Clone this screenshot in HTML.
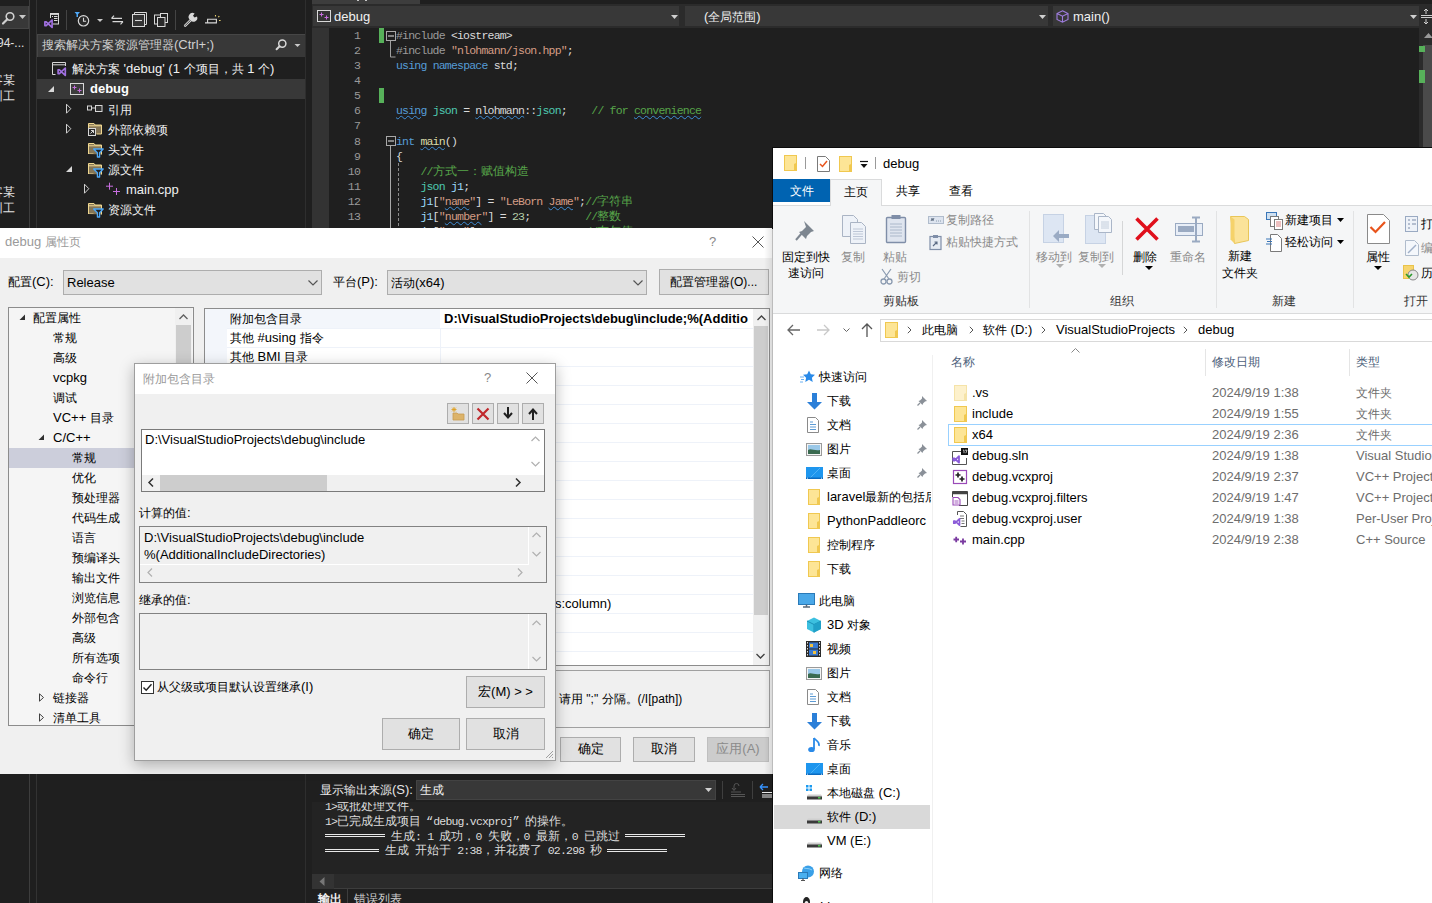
<!DOCTYPE html>
<html><head><meta charset="utf-8"><style>
*{box-sizing:border-box}
html,body{margin:0;padding:0}
body{width:1432px;height:903px;position:relative;overflow:hidden;background:#1f1f1f;font-family:"Liberation Sans",sans-serif;font-size:12px;color:#000}
.a{position:absolute}
.t{position:absolute;white-space:pre;line-height:14px;font-size:13px}
.mono{font-family:"Liberation Mono",monospace;font-size:11.5px;letter-spacing:-0.8px;white-space:pre}
svg{position:absolute;overflow:visible}
</style></head>
<body>
<div class="a" style="left:0px;top:6px;width:29px;height:23px;background:#383838;border-right:1px solid #454545;border-bottom:1px solid #454545"></div><div class="a" style="left:29px;top:0px;width:1px;height:903px;background:#3d3d3d"></div><div class="a" style="left:36px;top:0px;width:1px;height:903px;background:#333333"></div><div class="t" style="left:-3px;top:36.0px;line-height:14px;color:#e0e0e0;font-size:12px">94-...</div><div class="t" style="left:-9px;top:73.0px;line-height:14px;color:#e0e0e0"><span style="font-size:12px">客某</span></div><div class="t" style="left:-9px;top:89.0px;line-height:14px;color:#e0e0e0"><span style="font-size:12px">训工</span></div><div class="t" style="left:-9px;top:185.0px;line-height:14px;color:#e0e0e0"><span style="font-size:12px">客某</span></div><div class="t" style="left:-9px;top:201.0px;line-height:14px;color:#e0e0e0"><span style="font-size:12px">训工</span></div><svg style="left:2px;top:11px" width="14" height="14"><circle cx="8" cy="5.5" r="3.8" fill="none" stroke="#d0d0d0" stroke-width="1.6"/><path d="M5.3 8.2 L1 12.5" stroke="#d0d0d0" stroke-width="2.2" stroke-linecap="round"/></svg><svg style="left:19px;top:15px" width="7" height="5"><path d="M0 0h7l-3.5 4z" fill="#c8c8c8"/></svg><div class="a" style="left:305px;top:0px;width:1px;height:228px;background:#2e2e2e"></div><div class="a" style="left:305px;top:774px;width:1px;height:129px;background:#2e2e2e"></div><div class="a" style="left:66px;top:10px;width:1px;height:20px;background:#444"></div><div class="a" style="left:175px;top:10px;width:1px;height:20px;background:#444"></div><div class="a" style="left:37px;top:34px;width:268px;height:23px;background:#383838;border-top:1px solid #464646;border-left:1px solid #464646"></div><div class="t" style="left:42px;top:38.0px;line-height:14px;color:#d0d0d0"><span style="font-size:12px">搜索解决方案资源管理器</span>(Ctrl+;)</div><div class="a" style="left:37px;top:79px;width:268px;height:20px;background:#383838"></div><svg style="left:37px;top:0px" width="268" height="228" viewBox="37 0 268 228">
<!-- VS doc icon -->
<rect x="50.5" y="13.5" width="8" height="10.5" fill="#1f1f1f" stroke="#d8d8d8"/>
<path d="M50.5 14.2h8" stroke="#d8d8d8" stroke-width="1.4"/>
<path d="M52 16.5h1M54 16.5h3.5M52 18.5h1M54 18.5h3.5M54 20.5h3.5" stroke="#d8d8d8" stroke-width="1"/>
<rect x="43" y="18" width="10" height="10" fill="#1f1f1f"/>
<path transform="translate(44,19.2) scale(1.0)" d="M0.9 2.6 L2.2 2.6 L8.1 8.2 L8.1 0.8 L2.2 6.4 L0.9 6.4 Z" fill="none" stroke="#a070e0" stroke-width="1.7" stroke-linejoin="round"/>
<rect x="66" y="10" width="1" height="20" fill="#444"/>
<!-- filter clock -->
<path d="M74.5 12h5.5l-2 2.3v2.7h-1.5v-2.7z" fill="#4ea8f8"/>
<circle cx="83.5" cy="20.8" r="5.2" fill="#2a2a2a" stroke="#d8d8d8" stroke-width="1.2"/>
<path d="M83.5 17.8v3.4h2.6" fill="none" stroke="#d8d8d8" stroke-width="1.1"/>
<path d="M97 19h6l-3 3z" fill="#c8c8c8"/>
<!-- sync -->
<path d="M111.5 18.4h10.5M111.5 18.4l2.5-2.8M112.5 21.6h10.5M123 21.6l-2.5 2.8" fill="none" stroke="#d8d8d8" stroke-width="1.1"/>
<!-- collapse -->
<path d="M134.5 14V12.5h12v12H145" fill="none" stroke="#d8d8d8" stroke-width="1"/>
<rect x="132.5" y="14.5" width="12" height="12" fill="#333" stroke="#d8d8d8" stroke-width="1"/>
<path d="M135 20.5h7" stroke="#d8d8d8" stroke-width="1.1"/>
<!-- copy/pages -->
<rect x="154.5" y="15" width="6" height="9" fill="none" stroke="#d8d8d8" stroke-width="1"/>
<rect x="160.5" y="13.5" width="7" height="9" fill="#222" stroke="#d8d8d8" stroke-width="1"/>
<rect x="157.5" y="17.5" width="7.5" height="9" fill="#2a2a2a" stroke="#d8d8d8" stroke-width="1"/>
<rect x="175" y="10" width="1" height="20" fill="#444"/>
<!-- wrench -->
<path d="M185.2 25.6 L191.2 19.6" stroke="#d8d8d8" stroke-width="2.6" stroke-linecap="round"/>
<path d="M185.2 25.6 L191.2 19.6" stroke="#1f1f1f" stroke-width="0.8" stroke-linecap="round"/>
<path d="M190.5 20.2 A3.8 3.8 0 0 1 194.6 13.6 L193 15.8 L194.6 17.6 L197 16.4 A3.8 3.8 0 0 1 190.5 20.2 Z" fill="#d8d8d8"/>
<!-- preview -->
<path d="M205 22.9h2.6v-3.6h8.8v3.6h-8.8" fill="none" stroke="#d8d8d8" stroke-width="1.1"/>
<path d="M215.5 15v1.6M218.3 17.2l1-1M219 20.5h1.6" stroke="#e8d070" stroke-width="1.1"/>
<!-- search box icon -->
<circle cx="282.3" cy="43.6" r="3.6" fill="none" stroke="#d8d8d8" stroke-width="1.5"/>
<path d="M279.6 46.3 L276.6 49.3" stroke="#d8d8d8" stroke-width="2" stroke-linecap="round"/>
<path d="M294.5 44h6l-3 3z" fill="#c8c8c8"/>
<!-- solution icon -->
<path d="M55.5 74.5h-3v-12h13v3.5M52.5 64.8h13" fill="none" stroke="#d8d8d8" stroke-width="1"/>
<rect x="56.5" y="66.5" width="10" height="10" fill="#1f1f1f"/>
<path transform="translate(57.2,67.2) scale(1.0)" d="M0.9 2.6 L2.2 2.6 L8.1 8.2 L8.1 0.8 L2.2 6.4 L0.9 6.4 Z" fill="none" stroke="#a070e0" stroke-width="1.7" stroke-linejoin="round"/>
<!-- debug row -->
<path d="M54 86V92H48Z" fill="#d8d8d8"/>
<rect x="70.5" y="83.5" width="13" height="11" fill="#3d3d3d" stroke="#d8d8d8" stroke-width="1"/>
<path d="M72.5 87.5h4M74.5 85.5v4M77.5 90.5h4M79.5 88.5v4" stroke="#c86ee0" stroke-width="1"/>
<!-- refs -->
<path d="M66.5 104.2 L70.8 108.7 L66.5 113.2 Z" fill="none" stroke="#d0d0d0" stroke-width="1"/>
<rect x="87.5" y="106" width="4" height="4" fill="none" stroke="#d8d8d8" stroke-width="1"/>
<path d="M91.5 108h4" stroke="#d8d8d8" stroke-width="1"/>
<rect x="95.5" y="105.5" width="6.5" height="6" fill="#333" stroke="#d8d8d8" stroke-width="1"/>
<!-- ext deps -->
<path d="M66.5 124.2 L70.8 128.7 L66.5 133.2 Z" fill="none" stroke="#d0d0d0" stroke-width="1"/>
<path d="M88.5 128V123.5h5.5l1 1.5h6.5v9h-5" fill="#857657" stroke="#f0d890" stroke-width="1"/>
<path d="M89 125.8h12.5" stroke="#f0d890" stroke-width="1"/>
<rect x="88.5" y="128.5" width="7" height="7" fill="#2a2a2a" stroke="#d8d8d8" stroke-width="1"/>
<path d="M90.5 133.5l3-3M91 130.5h2.5V133" fill="none" stroke="#d8d8d8" stroke-width="1"/>
<path d="M88.5 154V143.5h5.5l1 1.5h6.5v9.5" fill="#857657" stroke="#f0d890" stroke-width="1"/>
<path d="M88.5 153.5h5" stroke="#f0d890" stroke-width="1"/>
<rect x="89" y="146" width="12" height="7.5" fill="#857657"/>
<path d="M89 145.8h12.5" stroke="#f0d890" stroke-width="1"/>
<path d="M93.7 149h9.5l-3.6 3.8v4.2h-2.2v-4.2z" fill="#1f1f1f" stroke="#4ea8f8" stroke-width="1.3" stroke-linejoin="round"/>
<path d="M88.5 174V163.5h5.5l1 1.5h6.5v9.5" fill="#857657" stroke="#f0d890" stroke-width="1"/>
<path d="M88.5 173.5h5" stroke="#f0d890" stroke-width="1"/>
<rect x="89" y="166" width="12" height="7.5" fill="#857657"/>
<path d="M89 165.8h12.5" stroke="#f0d890" stroke-width="1"/>
<path d="M93.7 169h9.5l-3.6 3.8v4.2h-2.2v-4.2z" fill="#1f1f1f" stroke="#4ea8f8" stroke-width="1.3" stroke-linejoin="round"/>
<path d="M88.5 214V203.5h5.5l1 1.5h6.5v9.5" fill="#857657" stroke="#f0d890" stroke-width="1"/>
<path d="M88.5 213.5h5" stroke="#f0d890" stroke-width="1"/>
<rect x="89" y="206" width="12" height="7.5" fill="#857657"/>
<path d="M89 205.8h12.5" stroke="#f0d890" stroke-width="1"/>
<path d="M93.7 209h9.5l-3.6 3.8v4.2h-2.2v-4.2z" fill="#1f1f1f" stroke="#4ea8f8" stroke-width="1.3" stroke-linejoin="round"/>
<path d="M72 166V172H66Z" fill="#d8d8d8"/>
<path d="M84.5 184.2 L88.8 188.7 L84.5 193.2 Z" fill="none" stroke="#d0d0d0" stroke-width="1"/>
<path d="M106 186.2h7M109.5 182.7v7M113 191.5h7M116.5 188v7" stroke="#c86ee0" stroke-width="1"/>
</svg><div class="t" style="left:72px;top:62.0px;line-height:14px;color:#f0f0f0"><span style="font-size:12px">解决方案</span> 'debug' (1 <span style="font-size:12px">个项目，共</span> 1 <span style="font-size:12px">个</span>)</div><div class="t" style="left:90px;top:82.0px;line-height:14px;color:#ffffff;font-weight:bold;font-size:13px">debug</div><div class="t" style="left:108px;top:103.0px;line-height:14px;color:#f0f0f0"><span style="font-size:12px">引用</span></div><div class="t" style="left:108px;top:123.0px;line-height:14px;color:#f0f0f0"><span style="font-size:12px">外部依赖项</span></div><div class="t" style="left:108px;top:143.0px;line-height:14px;color:#f0f0f0"><span style="font-size:12px">头文件</span></div><div class="t" style="left:108px;top:163.0px;line-height:14px;color:#f0f0f0"><span style="font-size:12px">源文件</span></div><div class="t" style="left:126px;top:183.0px;line-height:14px;color:#f0f0f0;font-size:13px">main.cpp</div><div class="t" style="left:108px;top:203.0px;line-height:14px;color:#f0f0f0"><span style="font-size:12px">资源文件</span></div><div class="a" style="left:312px;top:0px;width:108px;height:4px;background:#3d3d3d"></div><div class="a" style="left:312px;top:4px;width:1120px;height:24px;background:#2b2b2b"></div><div class="a" style="left:313px;top:6px;width:366px;height:20px;background:#383838"></div><div class="a" style="left:685px;top:6px;width:363px;height:20px;background:#383838"></div><div class="a" style="left:1053px;top:6px;width:366px;height:20px;background:#383838"></div><svg style="left:317px;top:10px" width="14" height="13">
<rect x="0.5" y="0.5" width="13" height="11" fill="#333" stroke="#d8d8d8"/>
<path d="M2.5 4.5h4M4.5 2.5v4M7.5 7.5h4M9.5 5.5v4" stroke="#c86ee0" stroke-width="1"/>
</svg><div class="t" style="left:334px;top:10.0px;line-height:14px;color:#f0f0f0;font-size:13px">debug</div><svg style="left:671px;top:15px" width="7" height="4"><path d="M0 0h7l-3.5 4z" fill="#d0d0d0"/></svg><svg style="left:1039px;top:15px" width="7" height="4"><path d="M0 0h7l-3.5 4z" fill="#d0d0d0"/></svg><svg style="left:1410px;top:15px" width="7" height="4"><path d="M0 0h7l-3.5 4z" fill="#d0d0d0"/></svg><div class="t" style="left:704px;top:10.0px;line-height:14px;color:#f0f0f0">(<span style="font-size:12px">全局范围</span>)</div><svg style="left:1056px;top:10px" width="13" height="13">
<path d="M6.5 0.8L12 3.5V9.5L6.5 12.2L1 9.5V3.5Z M1 3.5L6.5 6.2L12 3.5 M6.5 6.2V12.2" fill="none" stroke="#a07ee0" stroke-width="1.1"/>
</svg><div class="t" style="left:1073px;top:10.0px;line-height:14px;color:#f0f0f0;font-size:13px">main()</div><svg style="left:1420px;top:8px" width="12" height="16"><path d="M1 7.5h11M1 9.5h11M6 1v5M4 3l2-2 2 2M6 11v5M4 14l2 2 2-2" fill="none" stroke="#d0d0d0" stroke-width="1"/></svg><div class="a" style="left:312px;top:28px;width:17px;height:200px;background:#333333"></div><div class="a" style="left:1419px;top:28px;width:13px;height:200px;background:#2b2b2b"></div><div class="a" style="left:1423px;top:45px;width:9px;height:183px;background:#4a4a4a"></div><svg style="left:1424px;top:33px" width="9" height="5"><path d="M0 5L4.5 0L9 5z" fill="#999"/></svg><div class="a" style="left:1419px;top:46px;width:6px;height:6px;background:#57b15a"></div><div class="a" style="left:1419px;top:70px;width:6px;height:13px;background:#57b15a"></div><div class="a" style="left:312px;top:28px;width:1106px;height:200px;overflow:hidden"><div class="t mono" style="left:0px;top:1.0px;width:48px;text-align:right;color:#9a9a9a">1</div><div class="t mono" style="left:84px;top:1.0px;line-height:14px"><span style="color:#9b9b9b;">#include </span><span style="color:#dadada;">&lt;iostream&gt;</span></div><div class="t mono" style="left:0px;top:16.08px;width:48px;text-align:right;color:#9a9a9a">2</div><div class="t mono" style="left:84px;top:16.08px;line-height:14px"><span style="color:#9b9b9b;">#include </span><span style="color:#d69d85;">&quot;nlohmann/json.hpp&quot;</span><span style="color:#dadada;">;</span></div><div class="t mono" style="left:0px;top:31.159999999999997px;width:48px;text-align:right;color:#9a9a9a">3</div><div class="t mono" style="left:84px;top:31.159999999999997px;line-height:14px"><span style="color:#569cd6;">using</span><span style="color:#dadada;"> </span><span style="color:#569cd6;">namespace</span><span style="color:#dadada;"> std;</span></div><div class="t mono" style="left:0px;top:46.24000000000001px;width:48px;text-align:right;color:#9a9a9a">4</div><div class="t mono" style="left:0px;top:61.31999999999999px;width:48px;text-align:right;color:#9a9a9a">5</div><div class="t mono" style="left:0px;top:76.4px;width:48px;text-align:right;color:#9a9a9a">6</div><div class="t mono" style="left:84px;top:76.4px;line-height:14px"><span style="color:#569cd6;text-decoration:underline wavy #3f8fd8;text-decoration-thickness:1px;text-underline-offset:1px">using</span><span style="color:#dadada;"> </span><span style="color:#4ec9b0;">json</span><span style="color:#dadada;"> = </span><span style="color:#dadada;text-decoration:underline wavy #3f8fd8;text-decoration-thickness:1px;text-underline-offset:1px">nlohmann</span><span style="color:#dadada;">::</span><span style="color:#4ec9b0;">json</span><span style="color:#dadada;">;    </span><span style="color:#57a64a;">// for </span><span style="color:#57a64a;text-decoration:underline wavy #3f8fd8;text-decoration-thickness:1px;text-underline-offset:1px">convenience</span></div><div class="t mono" style="left:0px;top:91.48px;width:48px;text-align:right;color:#9a9a9a">7</div><div class="t mono" style="left:0px;top:106.56px;width:48px;text-align:right;color:#9a9a9a">8</div><div class="t mono" style="left:84px;top:106.56px;line-height:14px"><span style="color:#569cd6;">int</span><span style="color:#dadada;"> </span><span style="color:#dcdcaa;text-decoration:underline wavy #3f8fd8;text-decoration-thickness:1px;text-underline-offset:1px">main</span><span style="color:#dadada;">()</span></div><div class="t mono" style="left:0px;top:121.63999999999999px;width:48px;text-align:right;color:#9a9a9a">9</div><div class="t mono" style="left:84px;top:121.63999999999999px;line-height:14px"><span style="color:#dadada;">{</span></div><div class="t mono" style="left:0px;top:136.72px;width:48px;text-align:right;color:#9a9a9a">10</div><div class="t mono" style="left:84px;top:136.72px;line-height:14px"><span style="color:#57a64a;">    //<span style="font-size:12px;letter-spacing:0">方式一：赋值构造</span></span></div><div class="t mono" style="left:0px;top:151.8px;width:48px;text-align:right;color:#9a9a9a">11</div><div class="t mono" style="left:84px;top:151.8px;line-height:14px"><span style="color:#dadada;">    </span><span style="color:#4ec9b0;">json</span><span style="color:#dadada;"> </span><span style="color:#9cdcfe;">j1</span><span style="color:#dadada;">;</span></div><div class="t mono" style="left:0px;top:166.88px;width:48px;text-align:right;color:#9a9a9a">12</div><div class="t mono" style="left:84px;top:166.88px;line-height:14px"><span style="color:#dadada;">    </span><span style="color:#9cdcfe;">j1</span><span style="color:#dadada;">[</span><span style="color:#d69d85;">&quot;</span><span style="color:#d69d85;text-decoration:underline wavy #3f8fd8;text-decoration-thickness:1px;text-underline-offset:1px">name</span><span style="color:#d69d85;">&quot;</span><span style="color:#dadada;">] = </span><span style="color:#d69d85;">&quot;LeBorn </span><span style="color:#d69d85;text-decoration:underline wavy #3f8fd8;text-decoration-thickness:1px;text-underline-offset:1px">Jame</span><span style="color:#d69d85;">&quot;</span><span style="color:#dadada;">;</span><span style="color:#57a64a;">//<span style="font-size:12px;letter-spacing:0">字符串</span></span></div><div class="t mono" style="left:0px;top:181.96px;width:48px;text-align:right;color:#9a9a9a">13</div><div class="t mono" style="left:84px;top:181.96px;line-height:14px"><span style="color:#dadada;">    </span><span style="color:#9cdcfe;">j1</span><span style="color:#dadada;">[</span><span style="color:#d69d85;">&quot;</span><span style="color:#d69d85;text-decoration:underline wavy #3f8fd8;text-decoration-thickness:1px;text-underline-offset:1px">number</span><span style="color:#d69d85;">&quot;</span><span style="color:#dadada;">] = </span><span style="color:#b5cea8;">23</span><span style="color:#dadada;">;</span><span style="color:#57a64a;">         //<span style="font-size:12px;letter-spacing:0">整数</span></span></div><div class="t mono" style="left:0px;top:197.04px;width:48px;text-align:right;color:#9a9a9a">14</div><div class="t mono" style="left:84px;top:197.04px;line-height:14px"><span style="color:#dadada;">    </span><span style="color:#9cdcfe;">j1</span><span style="color:#dadada;">[</span><span style="color:#d69d85;">&quot;man&quot;</span><span style="color:#dadada;">] = </span><span style="color:#569cd6;">true</span><span style="color:#dadada;">;</span><span style="color:#57a64a;">          //<span style="font-size:12px;letter-spacing:0">布尔值</span></span></div></div><svg style="left:386px;top:31px" width="10" height="10"><rect x="0.5" y="0.5" width="9" height="9" fill="none" stroke="#a8a8a8"/><path d="M2 5h6" stroke="#e8e8e8"/></svg><svg style="left:390px;top:41px" width="6" height="17"><path d="M0.5 0v16h5" fill="none" stroke="#a0a0a0"/></svg><svg style="left:386px;top:136px" width="10" height="10"><rect x="0.5" y="0.5" width="9" height="9" fill="none" stroke="#a8a8a8"/><path d="M2 5h6" stroke="#e8e8e8"/></svg><div class="a" style="left:390px;top:146px;width:1px;height:82px;background:#a8a8a8"></div><svg style="left:397px;top:163px" width="3" height="65"><path d="M1.5 0v65" stroke="#8a8a8a" stroke-dasharray="3 2"/></svg><div class="a" style="left:379px;top:28px;width:5px;height:15px;background:#57b15a"></div><div class="a" style="left:379px;top:88px;width:5px;height:15px;background:#57b15a"></div><div class="a" style="left:0px;top:774px;width:1432px;height:129px;background:#1f1f1f"></div><div class="a" style="left:29px;top:774px;width:1px;height:129px;background:#3d3d3d"></div><div class="a" style="left:36px;top:774px;width:1px;height:129px;background:#333333"></div><div class="a" style="left:305px;top:774px;width:1px;height:129px;background:#2e2e2e"></div><div class="a" style="left:312px;top:802px;width:461px;height:72px;background:#232323"></div><div class="t" style="left:320px;top:783.0px;line-height:14px;color:#e6e6e6"><span style="font-size:12px">显示输出来源</span>(S):</div><div class="a" style="left:416px;top:780px;width:300px;height:20px;background:#383838;border:1px solid #434343"></div><div class="t" style="left:420px;top:783.0px;line-height:14px;color:#f0f0f0"><span style="font-size:12px">生成</span></div><svg style="left:705px;top:788px" width="7" height="4"><path d="M0 0h7l-3.5 4z" fill="#d0d0d0"/></svg><div class="a" style="left:722px;top:781px;width:1px;height:18px;background:#3f3f3f"></div><svg style="left:731px;top:783px" width="15" height="14"><path d="M3 7V3a2.5 2.5 0 0 1 5 0M1 5l2 2.5L5 5" fill="none" stroke="#555" stroke-width="1"/><path d="M0 9h10M0 11.5h14M0 13.5h14" stroke="#555" stroke-width="1.2"/></svg><div class="a" style="left:752px;top:781px;width:1px;height:18px;background:#3f3f3f"></div><svg style="left:759px;top:783px" width="14" height="14"><path d="M1 4h8M1 4l3-3M1 4l3 3" fill="none" stroke="#3794ff" stroke-width="1.3"/><path d="M3 9.5h11M3 12h11M3 14h11" stroke="#e8e8e8" stroke-width="1.2"/></svg><div class="a" style="left:312px;top:802px;width:461px;height:72px;overflow:hidden"><div class="t mono" style="left:13px;top:-2px;color:#dcdcdc">1><span style="font-size:12px;letter-spacing:0">或批处理文件。</span></div><div class="t mono" style="left:13px;top:13px;color:#dcdcdc">1&gt;<span style="font-size:12px;letter-spacing:0">已完成生成项目</span><span style="display:inline-block;width:12px;text-align:right;font-size:12px;letter-spacing:0">“</span>debug.vcxproj<span style="display:inline-block;width:12px;text-align:left;font-size:12px;letter-spacing:0">”</span><span style="font-size:12px;letter-spacing:0">的操作。</span></div><div class="t mono" style="left:79px;top:28px;color:#dcdcdc"><span style="font-size:12px;letter-spacing:0">生成</span>: 1 <span style="font-size:12px;letter-spacing:0">成功，</span>0 <span style="font-size:12px;letter-spacing:0">失败，</span>0 <span style="font-size:12px;letter-spacing:0">最新，</span>0 <span style="font-size:12px;letter-spacing:0">已跳过</span></div><div class="t mono" style="left:73px;top:42px;color:#dcdcdc"><span style="font-size:12px;letter-spacing:0">生成</span> <span style="font-size:12px;letter-spacing:0">开始于</span> 2:38<span style="font-size:12px;letter-spacing:0">，并花费了</span> 02.298 <span style="font-size:12px;letter-spacing:0">秒</span></div></div><div class="a" style="left:325px;top:834px;width:60px;height:1px;background:#e8e8e8"></div><div class="a" style="left:325px;top:836px;width:60px;height:1px;background:#e8e8e8"></div><div class="a" style="left:625px;top:834px;width:60px;height:1px;background:#e8e8e8"></div><div class="a" style="left:625px;top:836px;width:60px;height:1px;background:#e8e8e8"></div><div class="a" style="left:325px;top:849px;width:54px;height:1px;background:#e8e8e8"></div><div class="a" style="left:325px;top:851px;width:54px;height:1px;background:#e8e8e8"></div><div class="a" style="left:607px;top:849px;width:60px;height:1px;background:#e8e8e8"></div><div class="a" style="left:607px;top:851px;width:60px;height:1px;background:#e8e8e8"></div><div class="a" style="left:312px;top:874px;width:461px;height:15px;background:#2b2b2b;border-bottom:1px solid #3d3d3d"></div><div class="a" style="left:312px;top:874px;width:22px;height:15px;background:#333333"></div><svg style="left:319px;top:877px" width="6" height="9"><path d="M5.5 0L0.5 4.5L5.5 9z" fill="#777"/></svg><div class="t" style="left:318px;top:892.0px;line-height:14px;color:#f0f0f0;font-weight:bold"><span style="font-size:12px">输出</span></div><div class="a" style="left:347px;top:889px;width:1px;height:14px;background:#3d3d3d"></div><div class="t" style="left:354px;top:892.0px;line-height:14px;color:#d0d0d0"><span style="font-size:12px">错误列表</span></div><div class="a" style="left:357px;top:0px;width:2px;height:1px;background:#c8c8c8"></div><div class="a" style="left:365px;top:0px;width:2px;height:1px;background:#c8c8c8"></div><div class="a" style="left:0px;top:228px;width:773px;height:546px;background:#f0f0f0;border-right:1px solid #d0d0d0"></div><div class="a" style="left:0px;top:228px;width:772px;height:30px;background:#ffffff"></div><div class="t" style="left:5px;top:235.0px;line-height:14px;color:#9a9a9a;font-size:13px">debug <span style="font-size:12px">属性页</span></div><div class="t" style="left:709px;top:235.0px;line-height:14px;color:#888;font-size:13px">?</div><svg style="left:752px;top:236px" width="12" height="12"><path d="M0.5 0.5L11.5 11.5M11.5 0.5L0.5 11.5" stroke="#555" stroke-width="1"/></svg><div class="t" style="left:8px;top:275.0px;line-height:14px;"><span style="font-size:12px">配置</span>(C):</div><div class="a" style="left:63px;top:270px;width:259px;height:25px;background:#e1e1e1;border:1px solid #adadad"></div><div class="t" style="left:67px;top:276.0px;line-height:14px;font-size:13px">Release</div><svg style="left:308px;top:280px" width="10" height="6"><path d="M0.5 0.5L5 5L9.5 0.5" fill="none" stroke="#555" stroke-width="1.2"/></svg><div class="t" style="left:333px;top:275.0px;line-height:14px;"><span style="font-size:12px">平台</span>(P):</div><div class="a" style="left:387px;top:270px;width:260px;height:25px;background:#e1e1e1;border:1px solid #adadad"></div><div class="t" style="left:391px;top:276.0px;line-height:14px;font-size:13px"><span style="font-size:12px">活动</span>(x64)</div><svg style="left:633px;top:280px" width="10" height="6"><path d="M0.5 0.5L5 5L9.5 0.5" fill="none" stroke="#555" stroke-width="1.2"/></svg><div class="a" style="left:659px;top:269px;width:110px;height:26px;background:#e1e1e1;border:1px solid #adadad"></div><div class="t" style="left:670px;top:275.0px;line-height:14px;font-size:12px"><span style="font-size:12px">配置管理器</span>(O)...</div><div class="a" style="left:8px;top:307px;width:186px;height:419px;background:#f5f5f5;border:1px solid #8c8c8c"></div><div class="a" style="left:175px;top:308px;width:17px;height:417px;background:#f0f0f0"></div><div class="a" style="left:176px;top:325px;width:15px;height:120px;background:#cdcdcd"></div><svg style="left:179px;top:314px" width="9" height="6"><path d="M0.5 5L4.5 1L8.5 5" fill="none" stroke="#606060" stroke-width="1.3"/></svg><div class="a" style="left:9px;top:448px;width:166px;height:20px;background:#cccedb"></div><svg style="left:19px;top:314px" width="7" height="7"><path d="M6 0.5V6H0.5z" fill="#303030"/></svg><div class="t" style="left:33px;top:311.0px;line-height:14px;"><span style="font-size:12px">配置属性</span></div><div class="t" style="left:53px;top:331.0px;line-height:14px;"><span style="font-size:12px">常规</span></div><div class="t" style="left:53px;top:351.0px;line-height:14px;"><span style="font-size:12px">高级</span></div><div class="t" style="left:53px;top:371.0px;line-height:14px;font-size:13px">vcpkg</div><div class="t" style="left:53px;top:391.0px;line-height:14px;"><span style="font-size:12px">调试</span></div><div class="t" style="left:53px;top:411.0px;line-height:14px;font-size:13px">VC++ <span style="font-size:12px">目录</span></div><svg style="left:38px;top:434px" width="7" height="7"><path d="M6 0.5V6H0.5z" fill="#303030"/></svg><div class="t" style="left:53px;top:431.0px;line-height:14px;font-size:13px">C/C++</div><div class="t" style="left:72px;top:451.0px;line-height:14px;"><span style="font-size:12px">常规</span></div><div class="t" style="left:72px;top:471.0px;line-height:14px;"><span style="font-size:12px">优化</span></div><div class="t" style="left:72px;top:491.0px;line-height:14px;"><span style="font-size:12px">预处理器</span></div><div class="t" style="left:72px;top:511.0px;line-height:14px;"><span style="font-size:12px">代码生成</span></div><div class="t" style="left:72px;top:531.0px;line-height:14px;"><span style="font-size:12px">语言</span></div><div class="t" style="left:72px;top:551.0px;line-height:14px;"><span style="font-size:12px">预编译头</span></div><div class="t" style="left:72px;top:571.0px;line-height:14px;"><span style="font-size:12px">输出文件</span></div><div class="t" style="left:72px;top:591.0px;line-height:14px;"><span style="font-size:12px">浏览信息</span></div><div class="t" style="left:72px;top:611.0px;line-height:14px;"><span style="font-size:12px">外部包含</span></div><div class="t" style="left:72px;top:631.0px;line-height:14px;"><span style="font-size:12px">高级</span></div><div class="t" style="left:72px;top:651.0px;line-height:14px;"><span style="font-size:12px">所有选项</span></div><div class="t" style="left:72px;top:671.0px;line-height:14px;"><span style="font-size:12px">命令行</span></div><svg style="left:39px;top:693px" width="6" height="10"><path d="M0.5 0.8L4.5 4.5L0.5 8.2z" fill="none" stroke="#404040" stroke-width="1"/></svg><div class="t" style="left:53px;top:691.0px;line-height:14px;"><span style="font-size:12px">链接器</span></div><svg style="left:39px;top:713px" width="6" height="10"><path d="M0.5 0.8L4.5 4.5L0.5 8.2z" fill="none" stroke="#404040" stroke-width="1"/></svg><div class="t" style="left:53px;top:711.0px;line-height:14px;"><span style="font-size:12px">清单工具</span></div><div class="a" style="left:204px;top:308px;width:566px;height:358px;background:#ffffff;border:1px solid #8c8c8c"></div><div class="a" style="left:205px;top:309px;width:22px;height:356px;background:#f3f6fb"></div><div class="a" style="left:205px;top:309px;width:235px;height:19px;background:#f3f6fb"></div><div class="a" style="left:227px;top:328px;width:526px;height:1px;background:#eef2f9"></div><div class="a" style="left:227px;top:347px;width:526px;height:1px;background:#eef2f9"></div><div class="a" style="left:227px;top:366px;width:526px;height:1px;background:#eef2f9"></div><div class="a" style="left:227px;top:385px;width:526px;height:1px;background:#eef2f9"></div><div class="a" style="left:227px;top:404px;width:526px;height:1px;background:#eef2f9"></div><div class="a" style="left:227px;top:423px;width:526px;height:1px;background:#eef2f9"></div><div class="a" style="left:227px;top:442px;width:526px;height:1px;background:#eef2f9"></div><div class="a" style="left:227px;top:461px;width:526px;height:1px;background:#eef2f9"></div><div class="a" style="left:227px;top:480px;width:526px;height:1px;background:#eef2f9"></div><div class="a" style="left:227px;top:499px;width:526px;height:1px;background:#eef2f9"></div><div class="a" style="left:227px;top:518px;width:526px;height:1px;background:#eef2f9"></div><div class="a" style="left:227px;top:537px;width:526px;height:1px;background:#eef2f9"></div><div class="a" style="left:227px;top:556px;width:526px;height:1px;background:#eef2f9"></div><div class="a" style="left:227px;top:575px;width:526px;height:1px;background:#eef2f9"></div><div class="a" style="left:227px;top:594px;width:526px;height:1px;background:#eef2f9"></div><div class="a" style="left:227px;top:613px;width:526px;height:1px;background:#eef2f9"></div><div class="a" style="left:227px;top:632px;width:526px;height:1px;background:#eef2f9"></div><div class="a" style="left:227px;top:651px;width:526px;height:1px;background:#eef2f9"></div><div class="a" style="left:440px;top:328px;width:1px;height:337px;background:#eef2f9"></div><div class="t" style="left:230px;top:312.0px;line-height:14px;"><span style="font-size:12px">附加包含目录</span></div><div class="t" style="left:230px;top:331.0px;line-height:14px;"><span style="font-size:12px">其他</span> #using <span style="font-size:12px">指令</span></div><div class="t" style="left:230px;top:350.0px;line-height:14px;"><span style="font-size:12px">其他</span> BMI <span style="font-size:12px">目录</span></div><div class="t" style="left:444px;top:312.0px;line-height:14px;font-weight:bold;font-size:13px">D:\VisualStudioProjects\debug\include;%(Additio</div><div class="t" style="left:555px;top:597.0px;line-height:14px;font-size:13px">s:column)</div><div class="a" style="left:753px;top:309px;width:16px;height:356px;background:#f0f0f0"></div><div class="a" style="left:754px;top:326px;width:14px;height:289px;background:#cdcdcd"></div><svg style="left:757px;top:315px" width="9" height="6"><path d="M0.5 5L4.5 1L8.5 5" fill="none" stroke="#404040" stroke-width="1.3"/></svg><svg style="left:756px;top:653px" width="9" height="6"><path d="M0.5 1L4.5 5L8.5 1" fill="none" stroke="#404040" stroke-width="1.3"/></svg><div class="a" style="left:204px;top:670px;width:566px;height:58px;background:#f0f0f0;border:1px solid #a0a0a0"></div><div class="t" style="left:559px;top:692.0px;line-height:14px;font-size:12px"><span style="font-size:12px">请用</span> ";" <span style="font-size:12px">分隔。</span>(/I[path])</div><div class="a" style="left:560px;top:737px;width:61px;height:25px;background:#e1e1e1;border:1px solid #adadad"></div><div class="t" style="left:560px;top:737px;width:61px;height:25px;line-height:24px;text-align:center;color:#000">确定</div><div class="a" style="left:633px;top:737px;width:62px;height:25px;background:#e1e1e1;border:1px solid #adadad"></div><div class="t" style="left:633px;top:737px;width:62px;height:25px;line-height:24px;text-align:center;color:#000">取消</div><div class="a" style="left:707px;top:737px;width:62px;height:25px;background:#cccccc;border:1px solid #bfbfbf"></div><div class="t" style="left:707px;top:737px;width:62px;height:25px;line-height:24px;text-align:center;color:#8a8a8a">应用(A)</div><div class="a" style="left:134px;top:363px;width:422px;height:398px;background:#f0f0f0;border:1px solid #9e9e9e;box-shadow:0 4px 14px rgba(0,0,0,0.28)"></div><div class="a" style="left:135px;top:364px;width:420px;height:30px;background:#ffffff"></div><div class="t" style="left:143px;top:372.0px;line-height:14px;color:#9a9a9a"><span style="font-size:12px">附加包含目录</span></div><div class="t" style="left:484px;top:371.0px;line-height:14px;color:#888;font-size:13px">?</div><svg style="left:526px;top:372px" width="12" height="12"><path d="M0.5 0.5L11.5 11.5M11.5 0.5L0.5 11.5" stroke="#555" stroke-width="1"/></svg><div class="a" style="left:447px;top:403px;width:22px;height:21px;background:#e1e1e1;border:1px solid #adadad"></div><div class="a" style="left:472px;top:403px;width:22px;height:21px;background:#e1e1e1;border:1px solid #adadad"></div><div class="a" style="left:497px;top:403px;width:22px;height:21px;background:#e1e1e1;border:1px solid #adadad"></div><div class="a" style="left:522px;top:403px;width:22px;height:21px;background:#e1e1e1;border:1px solid #adadad"></div><svg style="left:450px;top:406px" width="16" height="16">
<path d="M3 7h4l1 1h6v6H3z" fill="#dcb36a" stroke="#c89c50" stroke-width="0.8"/>
<path d="M4 1v5M1.5 3.5h5M2.2 1.7l3.6 3.6M5.8 1.7L2.2 5.3" stroke="#e0a020" stroke-width="0.9"/>
</svg><svg style="left:476px;top:407px" width="14" height="14"><path d="M1.5 1.5L12.5 12.5M12.5 1.5L1.5 12.5" stroke="#c0282c" stroke-width="2.2"/></svg><svg style="left:502px;top:406px" width="12" height="14"><path d="M6 1v10M2 7l4 4.5 4-4.5" fill="none" stroke="#202020" stroke-width="2"/></svg><svg style="left:527px;top:407px" width="12" height="14"><path d="M6 13V3M2 7l4-4.5 4 4.5" fill="none" stroke="#202020" stroke-width="2"/></svg><div class="a" style="left:141px;top:429px;width:404px;height:63px;background:#ffffff;border:1px solid #7a7a7a"></div><div class="t" style="left:145px;top:433.0px;line-height:14px;font-size:13px">D:\VisualStudioProjects\debug\include</div><div class="a" style="left:527px;top:430px;width:17px;height:45px;background:#ffffff"></div><svg style="left:531px;top:436px" width="9" height="6"><path d="M0.5 5L4.5 1L8.5 5" fill="none" stroke="#b0b0b0" stroke-width="1.2"/></svg><svg style="left:531px;top:461px" width="9" height="6"><path d="M0.5 1L4.5 5L8.5 1" fill="none" stroke="#b0b0b0" stroke-width="1.2"/></svg><div class="a" style="left:142px;top:475px;width:385px;height:16px;background:#f0f0f0"></div><div class="a" style="left:527px;top:475px;width:17px;height:16px;background:#f0f0f0"></div><div class="a" style="left:160px;top:475px;width:167px;height:16px;background:#cdcdcd"></div><svg style="left:148px;top:478px" width="6" height="9"><path d="M5 0.5L1 4.5L5 8.5" fill="none" stroke="#303030" stroke-width="1.5"/></svg><svg style="left:515px;top:478px" width="6" height="9"><path d="M1 0.5L5 4.5L1 8.5" fill="none" stroke="#303030" stroke-width="1.5"/></svg><div class="t" style="left:139px;top:506.0px;line-height:14px;"><span style="font-size:12px">计算的值</span>:</div><div class="a" style="left:139px;top:526px;width:408px;height:57px;background:#f0f0f0;border:1px solid #828282"></div><div class="a" style="left:140px;top:527px;width:389px;height:38px;background:#f0f0f0;border-bottom:1px solid #ffffff;border-right:1px solid #ffffff"></div><div class="t" style="left:144px;top:531.0px;line-height:14px;font-size:13px">D:\VisualStudioProjects\debug\include</div><div class="t" style="left:144px;top:548.0px;line-height:14px;font-size:13px">%(AdditionalIncludeDirectories)</div><svg style="left:532px;top:532px" width="9" height="6"><path d="M0.5 5L4.5 1L8.5 5" fill="none" stroke="#b0b0b0" stroke-width="1.2"/></svg><svg style="left:532px;top:551px" width="9" height="6"><path d="M0.5 1L4.5 5L8.5 1" fill="none" stroke="#b0b0b0" stroke-width="1.2"/></svg><svg style="left:147px;top:568px" width="6" height="9"><path d="M5 0.5L1 4.5L5 8.5" fill="none" stroke="#b0b0b0" stroke-width="1.2"/></svg><svg style="left:517px;top:568px" width="6" height="9"><path d="M1 0.5L5 4.5L1 8.5" fill="none" stroke="#b0b0b0" stroke-width="1.2"/></svg><div class="t" style="left:139px;top:593.0px;line-height:14px;"><span style="font-size:12px">继承的值</span>:</div><div class="a" style="left:139px;top:613px;width:408px;height:57px;background:#f0f0f0;border:1px solid #828282"></div><div class="a" style="left:528px;top:614px;width:1px;height:55px;background:#ffffff"></div><svg style="left:532px;top:620px" width="9" height="6"><path d="M0.5 5L4.5 1L8.5 5" fill="none" stroke="#b0b0b0" stroke-width="1.2"/></svg><svg style="left:532px;top:656px" width="9" height="6"><path d="M0.5 1L4.5 5L8.5 1" fill="none" stroke="#b0b0b0" stroke-width="1.2"/></svg><div class="a" style="left:141px;top:681px;width:13px;height:13px;background:#ffffff;border:1px solid #333333"></div><svg style="left:142px;top:682px" width="11" height="11"><path d="M1.5 5.5L4.2 8.3L9.5 2.2" fill="none" stroke="#202020" stroke-width="1.4"/></svg><div class="t" style="left:157px;top:680.0px;line-height:14px;"><span style="font-size:12px">从父级或项目默认设置继承</span>(I)</div><div class="a" style="left:466px;top:676px;width:79px;height:32px;background:#e1e1e1;border:1px solid #adadad"></div><div class="t" style="left:466px;top:676px;width:79px;height:32px;line-height:31px;text-align:center;color:#000">宏(M) &gt; &gt;</div><div class="a" style="left:382px;top:718px;width:78px;height:32px;background:#e1e1e1;border:1px solid #adadad"></div><div class="t" style="left:382px;top:718px;width:78px;height:32px;line-height:31px;text-align:center;color:#000">确定</div><div class="a" style="left:466px;top:718px;width:79px;height:32px;background:#e1e1e1;border:1px solid #adadad"></div><div class="t" style="left:466px;top:718px;width:79px;height:32px;line-height:31px;text-align:center;color:#000">取消</div><svg style="left:545px;top:750px" width="9" height="9"><path d="M8 1L1 8M8 4L4 8M8 7L7 8" stroke="#a0a0a0" stroke-width="1"/></svg><div class="a" style="left:772px;top:147px;width:660px;height:1px;background:#0c0c0c"></div><div class="a" style="left:772px;top:147px;width:1px;height:82px;background:#0c0c0c"></div><div class="a" style="left:772px;top:774px;width:1px;height:129px;background:#0c0c0c"></div><div class="a" style="left:764px;top:228px;width:9px;height:546px;background:linear-gradient(to right,rgba(0,0,0,0),rgba(0,0,0,0.10))"></div><div class="a" style="left:773px;top:148px;width:659px;height:755px;background:#ffffff"></div><svg style="left:784px;top:155px" width="13" height="16"><rect x="0" y="0" width="13" height="16" fill="#fde596"/><rect x="0.5" y="0.5" width="12" height="15" fill="none" stroke="#f0c850" stroke-width="1"/><path d="M10 9L12 8V16H10Z" fill="#f0c850"/></svg><div class="a" style="left:805px;top:157px;width:1px;height:12px;background:#9a9a9a"></div><svg style="left:817px;top:156px" width="13" height="16"><path d="M0.5 0.5h8l4 4v11h-12z" fill="#fff" stroke="#7a7a7a"/><path d="M3 8l2.5 2.5L10 5" fill="none" stroke="#e8541c" stroke-width="1.5"/></svg><svg style="left:839px;top:156px" width="13" height="16"><rect x="0" y="0" width="13" height="16" fill="#fde596"/><rect x="0.5" y="0.5" width="12" height="15" fill="none" stroke="#f0c850" stroke-width="1"/><path d="M10 9L12 8V16H10Z" fill="#f0c850"/></svg><svg style="left:860px;top:161px" width="8" height="7"><path d="M0 0.5h8" stroke="#111" stroke-width="1.2"/><path d="M0.5 3h7l-3.5 4z" fill="#111"/></svg><div class="a" style="left:875px;top:157px;width:1px;height:12px;background:#9a9a9a"></div><div class="t" style="left:883px;top:157.0px;line-height:14px;font-size:13px;color:#000">debug</div><div class="a" style="left:773px;top:179px;width:57px;height:23px;background:#0063b1"></div><div class="t" style="left:773px;top:184.0px;line-height:14px;color:#fff;width:57px;text-align:center"><span style="font-size:12px">文件</span></div><div class="a" style="left:830px;top:179px;width:52px;height:27px;background:#f5f6f7;border:1px solid #dadbdc;border-bottom:none"></div><div class="t" style="left:830px;top:185.0px;line-height:14px;width:52px;text-align:center;color:#000"><span style="font-size:12px">主页</span></div><div class="t" style="left:896px;top:184.0px;line-height:14px;color:#000"><span style="font-size:12px">共享</span></div><div class="t" style="left:949px;top:184.0px;line-height:14px;color:#000"><span style="font-size:12px">查看</span></div><div class="a" style="left:773px;top:205px;width:659px;height:109px;background:#f5f6f7;border-top:1px solid #dadbdc;border-bottom:1px solid #dadbdc"></div><div class="a" style="left:831px;top:205px;width:50px;height:1px;background:#f5f6f7"></div><div class="a" style="left:1029px;top:211px;width:1px;height:97px;background:#e2e3e4"></div><div class="a" style="left:1216px;top:211px;width:1px;height:97px;background:#e2e3e4"></div><div class="a" style="left:1353px;top:211px;width:1px;height:97px;background:#e2e3e4"></div><div class="a" style="left:1122px;top:221px;width:1px;height:54px;background:#d5d6d7"></div><svg style="left:795px;top:218px" width="22" height="24"><path d="M9 3l10 10-3 1-4 4-1 3-7-7 3-1 4-4z" fill="#7d8690"/><path d="M7 15L1 22" stroke="#7d8690" stroke-width="2"/></svg><div class="t" style="left:782px;top:250.0px;line-height:14px;color:#000;"><span style="font-size:12px">固定到快</span></div><div class="t" style="left:788px;top:266.0px;line-height:14px;color:#000;"><span style="font-size:12px">速访问</span></div><svg style="left:842px;top:215px" width="25" height="29"><path d="M0.5 0.5h11l4 4v17h-15z" fill="#eef2f8" stroke="#aab4c4"/><path d="M8.5 7.5h11l4 4v17h-15z" fill="#eef2f8" stroke="#aab4c4"/><path d="M11 14h10M11 16.5h10M11 19h10M11 21.5h10M11 24h10" stroke="#b8c2d2" stroke-width="0.9"/></svg><div class="t" style="left:841px;top:250.0px;line-height:14px;color:#8a8a8a;"><span style="font-size:12px">复制</span></div><svg style="left:885px;top:214px" width="22" height="30"><rect x="1.5" y="3.5" width="19" height="25" rx="1" fill="#dfe5ef" stroke="#7f8ea8" stroke-width="1.4"/><rect x="6.5" y="1" width="9" height="4" fill="#7f8ea8"/><path d="M5 10h12M5 13h12M5 16h12M5 19h12M5 22h12" stroke="#a6b2c6" stroke-width="0.9"/></svg><div class="t" style="left:883px;top:250.0px;line-height:14px;color:#8a8a8a;"><span style="font-size:12px">粘贴</span></div><svg style="left:880px;top:268px" width="13" height="17"><path d="M2 1l7 10M11 1L4 11" stroke="#8a9ab0" stroke-width="1.2"/><circle cx="3.5" cy="13.5" r="2.5" fill="none" stroke="#8a9ab0" stroke-width="1.3"/><circle cx="9.5" cy="13.5" r="2.5" fill="none" stroke="#8a9ab0" stroke-width="1.3"/></svg><div class="t" style="left:897px;top:270.0px;line-height:14px;color:#8a8a8a;"><span style="font-size:12px">剪切</span></div><svg style="left:928px;top:215px" width="16" height="10"><rect x="0.5" y="1.5" width="15" height="7" fill="#dde4ef" stroke="#b0bccc"/><path d="M3 6l1-3 1 3 1-3M8 6h1M10 6h1M12 6h1" stroke="#7a8aa0" stroke-width="0.8"/></svg><div class="t" style="left:946px;top:213.0px;line-height:14px;color:#8a8a8a;"><span style="font-size:12px">复制路径</span></div><svg style="left:929px;top:235px" width="13" height="15"><rect x="1" y="1.5" width="11" height="13" fill="#e6ebf3" stroke="#7f8ea8" stroke-width="1.2"/><rect x="4" y="0" width="5" height="3" fill="#7f8ea8"/><path d="M4 11l4-4M5.5 7H8v2.5" fill="none" stroke="#5a6a84" stroke-width="1.1"/></svg><div class="t" style="left:946px;top:235.0px;line-height:14px;color:#8a8a8a;"><span style="font-size:12px">粘贴快捷方式</span></div><div class="t" style="left:883px;top:294.0px;line-height:14px;color:#333;"><span style="font-size:12px">剪贴板</span></div><svg style="left:1043px;top:214px" width="28" height="30"><rect x="0.5" y="0.5" width="20" height="28" fill="#dde6f3" stroke="#c6d2e4"/><path d="M10 22l6-6v4h10v4H16v4z" fill="#9aabc4"/></svg><div class="t" style="left:1036px;top:250.0px;line-height:14px;color:#8a8a8a;"><span style="font-size:12px">移动到</span></div><sv style="display:none"></sv><svg style="left:1085px;top:213px" width="29" height="31"><rect x="0.5" y="2.5" width="20" height="28" fill="#dde6f3" stroke="#c6d2e4"/><path d="M9.5 0.5h9l3 3v13h-12z" fill="#f4f7fb" stroke="#aab6c8"/><path d="M13.5 3.5h10l3 3v13h-13z" fill="#f4f7fb" stroke="#aab6c8"/><path d="M16 9h8M16 11h8M16 13h8M16 15h8" stroke="#b8c4d6" stroke-width="0.8"/></svg><div class="t" style="left:1078px;top:250.0px;line-height:14px;color:#8a8a8a;"><span style="font-size:12px">复制到</span></div><svg style="left:1056px;top:264px" width="8" height="4"><path d="M0 0h8l-4 4z" fill="#b0b0b0"/></svg><svg style="left:1098px;top:264px" width="8" height="4"><path d="M0 0h8l-4 4z" fill="#b0b0b0"/></svg><svg style="left:1134px;top:216px" width="26" height="26"><path d="M2.5 2.5L23.5 23.5M23.5 2.5L2.5 23.5" stroke="#e0101c" stroke-width="3.6"/></svg><div class="t" style="left:1133px;top:250.0px;line-height:14px;color:#000;"><span style="font-size:12px">删除</span></div><svg style="left:1145px;top:266px" width="8" height="4"><path d="M0 0h8l-4 4z" fill="#000"/></svg><svg style="left:1175px;top:216px" width="29" height="27"><rect x="0.5" y="7.5" width="27" height="12" fill="#e8eef7" stroke="#9aaac2"/><rect x="3" y="10" width="16" height="6" fill="#9aaac2"/><path d="M17 1.5h8M21 1.5v24M17 25.5h8" stroke="#9aaac2" stroke-width="2"/></svg><div class="t" style="left:1170px;top:250.0px;line-height:14px;color:#8a8a8a;"><span style="font-size:12px">重命名</span></div><div class="t" style="left:1110px;top:294.0px;line-height:14px;color:#333;"><span style="font-size:12px">组织</span></div><svg style="left:1230px;top:216px" width="20" height="28"><path d="M0.5 0.5h14l4 3v21l-14 3z" fill="#fbe39a" stroke="#e9c658"/><path d="M0.5 0.5v23l4 4V3.5z" fill="#f5d26a"/></svg><div class="t" style="left:1228px;top:249.0px;line-height:14px;color:#000;"><span style="font-size:12px">新建</span></div><div class="t" style="left:1222px;top:266.0px;line-height:14px;color:#000;"><span style="font-size:12px">文件夹</span></div><svg style="left:1266px;top:212px" width="17" height="18"><rect x="0.5" y="0.5" width="10" height="7" fill="#cfe0f0" stroke="#3a76b8"/><rect x="4.5" y="4.5" width="8" height="10" fill="#fff" stroke="#7a7a7a"/><rect x="8.5" y="7.5" width="8" height="10" fill="#fff" stroke="#7a7a7a"/><path d="M10 10h5M10 12h5M10 14h5" stroke="#d06060" stroke-width="0.8"/></svg><div class="t" style="left:1285px;top:213.0px;line-height:14px;color:#000;"><span style="font-size:12px">新建项目</span></div><svg style="left:1337px;top:218px" width="7" height="4"><path d="M0 0h7l-3.5 4z" fill="#000"/></svg><svg style="left:1266px;top:234px" width="16" height="18"><path d="M4.5 0.5h7l4 4v13h-11z" fill="#fff" stroke="#7a7a7a"/><path d="M0 5h6M1 7.5h5M0 10h6" stroke="#3a76b8" stroke-width="1.2"/></svg><div class="t" style="left:1285px;top:235.0px;line-height:14px;color:#000;"><span style="font-size:12px">轻松访问</span></div><svg style="left:1337px;top:240px" width="7" height="4"><path d="M0 0h7l-3.5 4z" fill="#000"/></svg><div class="t" style="left:1272px;top:294.0px;line-height:14px;color:#333;"><span style="font-size:12px">新建</span></div><svg style="left:1367px;top:214px" width="23" height="30"><path d="M0.5 0.5h16l6 6v23h-22z" fill="#fff" stroke="#8a8a8a"/><path d="M3.5 13l5 5L18 8" fill="none" stroke="#e8541c" stroke-width="2.2"/></svg><div class="t" style="left:1366px;top:250.0px;line-height:14px;color:#000;"><span style="font-size:12px">属性</span></div><svg style="left:1374px;top:266px" width="8" height="4"><path d="M0 0h8l-4 4z" fill="#000"/></svg><svg style="left:1405px;top:216px" width="14" height="16"><rect x="0.5" y="0.5" width="12" height="15" fill="#eef2f8" stroke="#9aaac2"/><path d="M3 4h2M7 4h4M3 8h2M7 8h4M3 12h2" stroke="#7a8aa6"/></svg><div class="t" style="left:1421px;top:217.0px;line-height:14px;color:#000;"><span style="font-size:12px">打</span></div><svg style="left:1405px;top:240px" width="14" height="16"><path d="M0.5 0.5h9l4 4v11h-13z" fill="#f4f7fb" stroke="#b0bccc"/><path d="M3 13l8-8" stroke="#a0b0c8" stroke-width="1.5"/></svg><div class="t" style="left:1421px;top:241.0px;line-height:14px;color:#888;"><span style="font-size:12px">编</span></div><svg style="left:1403px;top:265px" width="16" height="16"><rect x="0.5" y="0.5" width="10" height="13" fill="#f7d56e" stroke="#e9c34a"/><circle cx="10" cy="10" r="5" fill="#e6e6e6" stroke="#888"/><path d="M3 9l3 3 3-3" fill="none" stroke="#2a9a2a" stroke-width="1.6"/></svg><div class="t" style="left:1421px;top:266.0px;line-height:14px;color:#000;"><span style="font-size:12px">历</span></div><div class="t" style="left:1404px;top:294.0px;line-height:14px;color:#333;"><span style="font-size:12px">打开</span></div><svg style="left:787px;top:324px" width="13" height="12"><path d="M1 6h12M6 1L1 6l5 5" fill="none" stroke="#666" stroke-width="1.3"/></svg><svg style="left:817px;top:324px" width="13" height="12"><path d="M0 6h12M7 1l5 5-5 5" fill="none" stroke="#c8c8c8" stroke-width="1.3"/></svg><svg style="left:843px;top:328px" width="7" height="5"><path d="M0.5 0.5L3.5 3.5L6.5 0.5" fill="none" stroke="#666" stroke-width="1"/></svg><svg style="left:861px;top:323px" width="12" height="14"><path d="M6 14V1M1 6l5-5 5 5" fill="none" stroke="#555" stroke-width="1.3"/></svg><div class="a" style="left:880px;top:319px;width:552px;height:23px;background:#fff;border:1px solid #d9d9d9;border-right:none"></div><svg style="left:885px;top:322px" width="13" height="16"><rect x="0" y="0" width="13" height="16" fill="#fde596"/><rect x="0.5" y="0.5" width="12" height="15" fill="none" stroke="#f0c850" stroke-width="1"/><path d="M10 9L12 8V16H10Z" fill="#f0c850"/></svg><svg style="left:907px;top:326px" width="5" height="8"><path d="M0.8 0.8L4 4L0.8 7.2" fill="none" stroke="#555" stroke-width="1"/></svg><div class="t" style="left:922px;top:323.0px;line-height:14px;color:#000;"><span style="font-size:12px">此电脑</span></div><svg style="left:969px;top:326px" width="5" height="8"><path d="M0.8 0.8L4 4L0.8 7.2" fill="none" stroke="#555" stroke-width="1"/></svg><div class="t" style="left:983px;top:323.0px;line-height:14px;color:#000;font-size:13px"><span style="font-size:12px"><span style="font-size:12px">软件</span></span> (D:)</div><svg style="left:1041px;top:326px" width="5" height="8"><path d="M0.8 0.8L4 4L0.8 7.2" fill="none" stroke="#555" stroke-width="1"/></svg><div class="t" style="left:1056px;top:323.0px;line-height:14px;color:#000;font-size:13px">VisualStudioProjects</div><svg style="left:1183px;top:326px" width="5" height="8"><path d="M0.8 0.8L4 4L0.8 7.2" fill="none" stroke="#555" stroke-width="1"/></svg><div class="t" style="left:1198px;top:323.0px;line-height:14px;color:#000;font-size:13px">debug</div><div class="a" style="left:932px;top:355px;width:1px;height:548px;background:#f0f0f0"></div><svg style="left:800px;top:370px" width="16" height="14"><path d="M9 0.5l1.8 3.8 4.2.5-3.1 2.9.8 4.2L9 9.8l-3.7 2.1.8-4.2-3.1-2.9 4.2-.5z" fill="#2a8ae8"/><path d="M0 7h4M1 9.5h3M0 12h3" stroke="#6ab0f0" stroke-width="1"/></svg><div class="t" style="left:819px;top:370.0px;line-height:14px;color:#000;"><span style="font-size:12px">快速访问</span></div><svg style="left:806px;top:393px" width="17" height="17"><path d="M6 0h5v9h5l-7.5 7.5L1 9h5z" fill="#2b7fd8"/></svg><div class="t" style="left:827px;top:394.0px;line-height:14px;color:#000;font-size:13px"><span style="font-size:12px"><span style="font-size:12px">下载</span></span></div><svg style="left:917px;top:395px" width="11" height="11"><path d="M5 1l5 5-2 .5-2 2-.5 1.5-4-4 1.5-.5 2-2z" fill="#8a9098"/><path d="M3 8L0.5 10.5" stroke="#8a9098" stroke-width="1.3"/></svg><svg style="left:807px;top:417px" width="12" height="16"><path d="M0.5 0.5h8l3 3v12h-11z" fill="#fff" stroke="#8a8a8a"/><path d="M3 5h3M3 7.5h6M3 10h6M3 12.5h6" stroke="#4a90d0" stroke-width="0.9"/></svg><div class="t" style="left:827px;top:418.0px;line-height:14px;color:#000;font-size:13px"><span style="font-size:12px"><span style="font-size:12px">文档</span></span></div><svg style="left:917px;top:419px" width="11" height="11"><path d="M5 1l5 5-2 .5-2 2-.5 1.5-4-4 1.5-.5 2-2z" fill="#8a9098"/><path d="M3 8L0.5 10.5" stroke="#8a9098" stroke-width="1.3"/></svg><svg style="left:806px;top:443px" width="16" height="13"><rect x="0.5" y="0.5" width="15" height="12" fill="#f4f4f4" stroke="#9a9a9a"/><rect x="2" y="2" width="12" height="9" fill="#9ac8e8"/><path d="M2 7c3-2 6 1 12 0v4H2z" fill="#3a6a50"/></svg><div class="t" style="left:827px;top:442.0px;line-height:14px;color:#000;font-size:13px"><span style="font-size:12px"><span style="font-size:12px">图片</span></span></div><svg style="left:917px;top:443px" width="11" height="11"><path d="M5 1l5 5-2 .5-2 2-.5 1.5-4-4 1.5-.5 2-2z" fill="#8a9098"/><path d="M3 8L0.5 10.5" stroke="#8a9098" stroke-width="1.3"/></svg><svg style="left:806px;top:467px" width="17" height="13"><rect x="0" y="0" width="17" height="12" fill="#1e96ee"/><path d="M4 11L14 1" stroke="#5ab8f8" stroke-width="0.8"/><rect x="0" y="10.5" width="17" height="1.5" fill="#0a6ac0"/><path d="M1 11.2h1M15 11.2h1" stroke="#fff" stroke-width="0.8"/></svg><div class="t" style="left:827px;top:466.0px;line-height:14px;color:#000;font-size:13px"><span style="font-size:12px"><span style="font-size:12px">桌面</span></span></div><svg style="left:917px;top:467px" width="11" height="11"><path d="M5 1l5 5-2 .5-2 2-.5 1.5-4-4 1.5-.5 2-2z" fill="#8a9098"/><path d="M3 8L0.5 10.5" stroke="#8a9098" stroke-width="1.3"/></svg><div class="a" style="left:773px;top:480px;width:158px;height:30px;overflow:hidden"><div class="t" style="left:54px;top:10px;font-size:13px">laravel<span style="font-size:12px">最新的包括后端</span></div></div><svg style="left:808px;top:489px" width="12" height="16"><rect x="0" y="0" width="12" height="16" fill="#fde596"/><rect x="0.5" y="0.5" width="11" height="15" fill="none" stroke="#f0c850" stroke-width="1"/><path d="M9 9L11 8V16H9Z" fill="#f0c850"/></svg><svg style="left:808px;top:513px" width="12" height="16"><rect x="0" y="0" width="12" height="16" fill="#fde596"/><rect x="0.5" y="0.5" width="11" height="15" fill="none" stroke="#f0c850" stroke-width="1"/><path d="M9 9L11 8V16H9Z" fill="#f0c850"/></svg><div class="t" style="left:827px;top:514.0px;line-height:14px;color:#000;font-size:13px">PythonPaddleorc</div><svg style="left:808px;top:537px" width="12" height="16"><rect x="0" y="0" width="12" height="16" fill="#fde596"/><rect x="0.5" y="0.5" width="11" height="15" fill="none" stroke="#f0c850" stroke-width="1"/><path d="M9 9L11 8V16H9Z" fill="#f0c850"/></svg><div class="t" style="left:827px;top:538.0px;line-height:14px;color:#000;font-size:13px"><span style="font-size:12px"><span style="font-size:12px">控制程序</span></span></div><svg style="left:808px;top:561px" width="12" height="16"><rect x="0" y="0" width="12" height="16" fill="#fde596"/><rect x="0.5" y="0.5" width="11" height="15" fill="none" stroke="#f0c850" stroke-width="1"/><path d="M9 9L11 8V16H9Z" fill="#f0c850"/></svg><div class="t" style="left:827px;top:562.0px;line-height:14px;color:#000;font-size:13px"><span style="font-size:12px"><span style="font-size:12px">下载</span></span></div><svg style="left:798px;top:593px" width="17" height="16"><rect x="0.5" y="0.5" width="16" height="11" fill="#4aa8e8" stroke="#2a7ab8"/><path d="M5 14h7M8.5 11.5v2.5" stroke="#5a6a7a" stroke-width="1.5"/></svg><div class="t" style="left:819px;top:594.0px;line-height:14px;color:#000;"><span style="font-size:12px">此电脑</span></div><svg style="left:806px;top:617px" width="16" height="16"><path d="M8 0.5L15 4v8l-7 3.5L1 12V4z" fill="#3cc0e0"/><path d="M1 4l7 3.5L15 4M8 7.5v8" fill="none" stroke="#1a90b8" stroke-width="1"/><path d="M8 7.5L15 4v8l-7 3.5z" fill="#20a0c8"/></svg><div class="t" style="left:827px;top:618.0px;line-height:14px;color:#000;font-size:13px">3D <span style="font-size:12px"><span style="font-size:12px">对象</span></span></div><svg style="left:806px;top:641px" width="15" height="16"><rect x="0" y="0" width="15" height="16" fill="#2a2a2a"/><rect x="3" y="1.5" width="9" height="6" fill="#3a7ad0"/><rect x="4" y="3" width="3" height="3" fill="#f0c040"/><rect x="3" y="8.5" width="9" height="6" fill="#3a7ad0"/><rect x="7" y="10" width="3" height="3" fill="#f0c040"/><path d="M1.5 1v14M13.5 1v14" stroke="#ddd" stroke-width="1" stroke-dasharray="1.5 1.5"/></svg><div class="t" style="left:827px;top:642.0px;line-height:14px;color:#000;font-size:13px"><span style="font-size:12px"><span style="font-size:12px">视频</span></span></div><svg style="left:806px;top:667px" width="16" height="13"><rect x="0.5" y="0.5" width="15" height="12" fill="#f4f4f4" stroke="#9a9a9a"/><rect x="2" y="2" width="12" height="9" fill="#9ac8e8"/><path d="M2 7c3-2 6 1 12 0v4H2z" fill="#3a6a50"/></svg><div class="t" style="left:827px;top:666.0px;line-height:14px;color:#000;font-size:13px"><span style="font-size:12px"><span style="font-size:12px">图片</span></span></div><svg style="left:807px;top:689px" width="12" height="16"><path d="M0.5 0.5h8l3 3v12h-11z" fill="#fff" stroke="#8a8a8a"/><path d="M3 5h3M3 7.5h6M3 10h6M3 12.5h6" stroke="#4a90d0" stroke-width="0.9"/></svg><div class="t" style="left:827px;top:690.0px;line-height:14px;color:#000;font-size:13px"><span style="font-size:12px"><span style="font-size:12px">文档</span></span></div><svg style="left:806px;top:713px" width="17" height="17"><path d="M6 0h5v9h5l-7.5 7.5L1 9h5z" fill="#2b7fd8"/></svg><div class="t" style="left:827px;top:714.0px;line-height:14px;color:#000;font-size:13px"><span style="font-size:12px"><span style="font-size:12px">下载</span></span></div><svg style="left:808px;top:737px" width="13" height="16"><path d="M6 1v11" stroke="#2a8ae8" stroke-width="1.8"/><ellipse cx="3.5" cy="12.5" rx="3.3" ry="2.6" fill="#2a8ae8"/><path d="M6 1c2 3 6 3 5 8" fill="none" stroke="#2a8ae8" stroke-width="1.6"/></svg><div class="t" style="left:827px;top:738.0px;line-height:14px;color:#000;font-size:13px"><span style="font-size:12px"><span style="font-size:12px">音乐</span></span></div><svg style="left:806px;top:763px" width="17" height="13"><rect x="0" y="0" width="17" height="12" fill="#1e96ee"/><path d="M4 11L14 1" stroke="#5ab8f8" stroke-width="0.8"/><rect x="0" y="10.5" width="17" height="1.5" fill="#0a6ac0"/><path d="M1 11.2h1M15 11.2h1" stroke="#fff" stroke-width="0.8"/></svg><div class="t" style="left:827px;top:762.0px;line-height:14px;color:#000;font-size:13px"><span style="font-size:12px"><span style="font-size:12px">桌面</span></span></div><svg style="left:806px;top:785px" width="17" height="16"><path d="M0 0h2.5v2.5H0zM3.5 0h2.5v2.5H3.5zM0 3.5h2.5V6H0zM3.5 3.5h2.5V6H3.5z" fill="#1a9af0"/><path d="M2 9.5h13l1 1.5v3H1v-3z" fill="#cfcfcf"/><rect x="1" y="11.5" width="15" height="3" fill="#3a3a3a"/><rect x="12" y="12" width="2.5" height="1.5" fill="#4ac04a"/></svg><div class="t" style="left:827px;top:786.0px;line-height:14px;color:#000;font-size:13px"><span style="font-size:12px"><span style="font-size:12px">本地磁盘</span></span> (C:)</div><div class="a" style="left:774px;top:805px;width:156px;height:24px;background:#d9d9d9"></div><svg style="left:806px;top:809px" width="17" height="16"><path d="M2 9.5h13l1 1.5v3H1v-3z" fill="#cfcfcf"/><rect x="1" y="11.5" width="15" height="3" fill="#3a3a3a"/><rect x="12" y="12" width="2.5" height="1.5" fill="#4ac04a"/></svg><div class="t" style="left:827px;top:810.0px;line-height:14px;color:#000;font-size:13px"><span style="font-size:12px"><span style="font-size:12px">软件</span></span> (D:)</div><svg style="left:806px;top:833px" width="17" height="16"><path d="M2 9.5h13l1 1.5v3H1v-3z" fill="#cfcfcf"/><rect x="1" y="11.5" width="15" height="3" fill="#3a3a3a"/><rect x="12" y="12" width="2.5" height="1.5" fill="#4ac04a"/></svg><div class="t" style="left:827px;top:834.0px;line-height:14px;color:#000;font-size:13px">VM (E:)</div><svg style="left:798px;top:865px" width="17" height="17"><circle cx="10" cy="6.5" r="6" fill="#3aa0e8"/><path d="M6 3c3 1 5 0 8 2" stroke="#8ad0f8" stroke-width="1" fill="none"/><rect x="0.5" y="7.5" width="9" height="6" fill="#4ab0f0" stroke="#2a7ab8"/><path d="M3 15.5h4M5 13.5v2" stroke="#555" stroke-width="1.2"/></svg><div class="t" style="left:819px;top:866.0px;line-height:14px;color:#000;"><span style="font-size:12px">网络</span></div><svg style="left:802px;top:897px" width="9" height="12"><ellipse cx="4.5" cy="5" rx="3.5" ry="5" fill="#222"/><ellipse cx="4.5" cy="7" rx="2" ry="3" fill="#eee"/></svg><div class="t" style="left:820px;top:900.0px;line-height:14px;color:#000;font-size:13px">Linux</div><div class="t" style="left:951px;top:355.0px;line-height:14px;color:#4c607a;"><span style="font-size:12px">名称</span></div><svg style="left:1071px;top:348px" width="9" height="5"><path d="M0.5 4.5L4.5 0.5L8.5 4.5" fill="none" stroke="#888" stroke-width="1"/></svg><div class="a" style="left:1205px;top:349px;width:1px;height:27px;background:#e5e5e5"></div><div class="t" style="left:1212px;top:355.0px;line-height:14px;color:#4c607a;"><span style="font-size:12px">修改日期</span></div><div class="a" style="left:1349px;top:349px;width:1px;height:27px;background:#e5e5e5"></div><div class="t" style="left:1356px;top:355.0px;line-height:14px;color:#4c607a;"><span style="font-size:12px">类型</span></div><div class="a" style="left:948px;top:424px;width:484px;height:22px;border:1px solid #99d1ff;border-right:none;background:#fff"></div><svg style="left:954px;top:385px" width="13" height="16"><rect x="0" y="0" width="13" height="16" fill="#fdf1cc"/><rect x="0.5" y="0.5" width="12" height="15" fill="none" stroke="#f5e3a8" stroke-width="1"/><path d="M10 9L12 8V16H10Z" fill="#f5e3a8"/></svg><div class="t" style="left:972px;top:386.0px;line-height:14px;color:#000;font-size:13px">.vs</div><div class="t" style="left:1212px;top:386.0px;line-height:14px;color:#6d6d6d;font-size:13px">2024/9/19 1:38</div><div class="t" style="left:1356px;top:386.0px;line-height:14px;color:#6d6d6d;font-size:13px"><span style="font-size:12px"><span style="font-size:12px">文件夹</span></span></div><svg style="left:954px;top:406px" width="13" height="16"><rect x="0" y="0" width="13" height="16" fill="#fde596"/><rect x="0.5" y="0.5" width="12" height="15" fill="none" stroke="#f0c850" stroke-width="1"/><path d="M10 9L12 8V16H10Z" fill="#f0c850"/></svg><div class="t" style="left:972px;top:407.0px;line-height:14px;color:#000;font-size:13px">include</div><div class="t" style="left:1212px;top:407.0px;line-height:14px;color:#6d6d6d;font-size:13px">2024/9/19 1:55</div><div class="t" style="left:1356px;top:407.0px;line-height:14px;color:#6d6d6d;font-size:13px"><span style="font-size:12px"><span style="font-size:12px">文件夹</span></span></div><svg style="left:954px;top:427px" width="13" height="16"><rect x="0" y="0" width="13" height="16" fill="#fde596"/><rect x="0.5" y="0.5" width="12" height="15" fill="none" stroke="#f0c850" stroke-width="1"/><path d="M10 9L12 8V16H10Z" fill="#f0c850"/></svg><div class="t" style="left:972px;top:428.0px;line-height:14px;color:#000;font-size:13px">x64</div><div class="t" style="left:1212px;top:428.0px;line-height:14px;color:#6d6d6d;font-size:13px">2024/9/19 2:36</div><div class="t" style="left:1356px;top:428.0px;line-height:14px;color:#6d6d6d;font-size:13px"><span style="font-size:12px"><span style="font-size:12px">文件夹</span></span></div><svg style="left:952px;top:448px" width="16" height="17"><path d="M9 3.5H0.5v13h14V10" fill="none" stroke="#555"/><rect x="9" y="0" width="7" height="7" fill="#111"/><path d="M11 2.2h1v3M13 2.2h2l-1.2 3" fill="none" stroke="#fff" stroke-width="0.7"/><path d="M1.2 10.5h1.3L7 14.6V8.2L2.5 12.6H1.2Z" fill="none" stroke="#8a5ad8" stroke-width="1.8" stroke-linejoin="round"/></svg><div class="t" style="left:972px;top:449.0px;line-height:14px;color:#000;font-size:13px">debug.sln</div><div class="t" style="left:1212px;top:449.0px;line-height:14px;color:#6d6d6d;font-size:13px">2024/9/19 1:38</div><div class="t" style="left:1356px;top:449.0px;line-height:14px;color:#6d6d6d;font-size:13px">Visual Studio Solution</div><svg style="left:953px;top:470px" width="15" height="15"><rect x="0.5" y="0.5" width="13" height="13" fill="#fff" stroke="#9a4ab8" stroke-width="1.2"/><path d="M2.5 5h5M5 2.5v5M6.5 9h5M9 6.5v5" stroke="#222" stroke-width="1.7"/></svg><div class="t" style="left:972px;top:470.0px;line-height:14px;color:#000;font-size:13px">debug.vcxproj</div><div class="t" style="left:1212px;top:470.0px;line-height:14px;color:#6d6d6d;font-size:13px">2024/9/19 2:37</div><div class="t" style="left:1356px;top:470.0px;line-height:14px;color:#6d6d6d;font-size:13px">VC++ Project</div><svg style="left:952px;top:491px" width="16" height="15"><path d="M7 14.5h8.5V0.5H0.5V6" fill="none" stroke="#444"/><path d="M0.5 2h15" stroke="#444" stroke-width="2.5"/><path d="M1 6.5h5l2 2v5.5H1z" fill="#fff" stroke="#9a4ab8" stroke-width="1.1"/><path d="M2.5 10h4M2.5 12h4" stroke="#9a4ab8" stroke-width="0.9"/></svg><div class="t" style="left:972px;top:491.0px;line-height:14px;color:#000;font-size:13px">debug.vcxproj.filters</div><div class="t" style="left:1212px;top:491.0px;line-height:14px;color:#6d6d6d;font-size:13px">2024/9/19 1:47</div><div class="t" style="left:1356px;top:491.0px;line-height:14px;color:#6d6d6d;font-size:13px">VC++ Project Filters</div><svg style="left:953px;top:511px" width="14" height="17"><path d="M4.5 4V0.5h6l3 3v12h-6" fill="#fff" stroke="#555"/><path d="M7 5h4M7 7.5h4M8.5 10h3M8.5 12.5h3" stroke="#666" stroke-width="0.9"/><path d="M0.8 10h1.2L6.5 14.2V7.8L2 12.2H0.8Z" fill="none" stroke="#8a5ad8" stroke-width="1.7" stroke-linejoin="round"/></svg><div class="t" style="left:972px;top:512.0px;line-height:14px;color:#000;font-size:13px">debug.vcxproj.user</div><div class="t" style="left:1212px;top:512.0px;line-height:14px;color:#6d6d6d;font-size:13px">2024/9/19 1:38</div><div class="t" style="left:1356px;top:512.0px;line-height:14px;color:#6d6d6d;font-size:13px">Per-User Project Options</div><svg style="left:953px;top:536px" width="15" height="10"><path d="M0.5 3.5h5.5M3.2 0.8v5.5M7 5.5h6M10 2.5v6" stroke="#7a3aa0" stroke-width="1.8"/></svg><div class="t" style="left:972px;top:533.0px;line-height:14px;color:#000;font-size:13px">main.cpp</div><div class="t" style="left:1212px;top:533.0px;line-height:14px;color:#6d6d6d;font-size:13px">2024/9/19 2:38</div><div class="t" style="left:1356px;top:533.0px;line-height:14px;color:#6d6d6d;font-size:13px">C++ Source</div>
</body></html>
